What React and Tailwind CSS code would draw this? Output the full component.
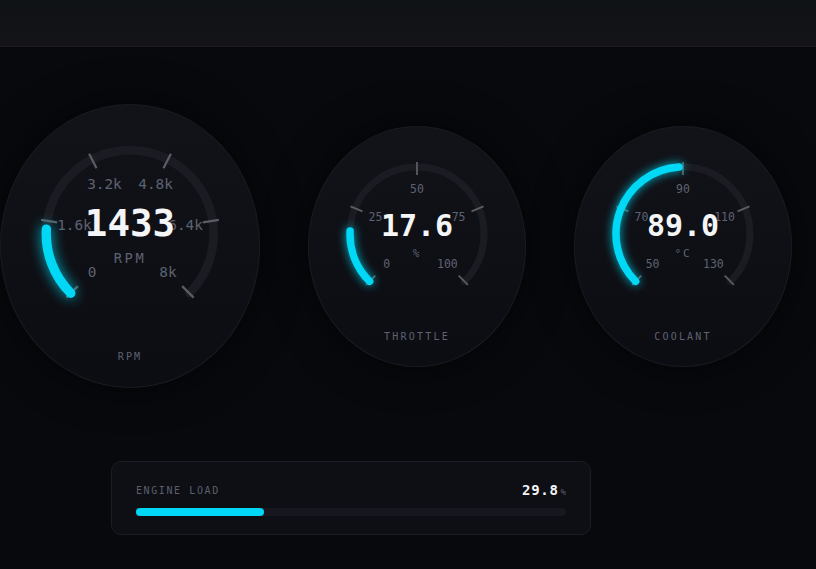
import React from "react";

const CYAN = "#00d8f5";

const polar = (cx, cy, r, a) => {
  const rad = (a * Math.PI) / 180;
  return [cx + r * Math.sin(rad), cy - r * Math.cos(rad)];
};

const arcPath = (cx, cy, r, from, to) => {
  const [x1, y1] = polar(cx, cy, r, from);
  const [x2, y2] = polar(cx, cy, r, to);
  const large = to - from > 180 ? 1 : 0;
  return `M ${x1} ${y1} A ${r} ${r} 0 ${large} 1 ${x2} ${y2}`;
};

function Gauge({ value, min, max, ticks, display, unit, label, scale = 1, w, h }) {
  const cx = 80;
  const cy = 80;
  const pct = Math.min(1, Math.max(0, (value - min) / (max - min)));
  const end = -135 + pct * 270;
  const size = 160 * scale;

  return (
    <div
      className={`shrink-0 rounded-[50%] border border-[#1a1b22] bg-gradient-to-b from-[#121319] to-[#0c0d12] shadow-[0_0_40px_rgba(0,0,0,0.6)] flex flex-col items-center ${w} ${h} ${
        scale > 1 ? "pt-[29px]" : "pt-[27px]"
      }`}
    >
      <svg width={size} height={size} viewBox="0 0 160 160" className="overflow-visible">
        <path
          d={arcPath(cx, cy, 67, -135, 135)}
          fill="none"
          stroke="#1b1c23"
          strokeWidth="7"
          strokeLinecap="round"
        />
        {ticks.map((t, i) => {
          const a = -135 + (i * 270) / (ticks.length - 1);
          const [x1, y1] = polar(cx, cy, 59, a);
          const [x2, y2] = polar(cx, cy, 72, a);
          const lr = Math.abs(a) > 100 ? 43 : 45;
          const [lx, ly] = polar(cx, cy, lr, a);
          return (
            <g key={t}>
              <line x1={x1} y1={y1} x2={x2} y2={y2} stroke="#5b5d64" strokeWidth="1.8" />
              <text
                x={lx}
                y={ly}
                textAnchor="middle"
                dominantBaseline="central"
                fontSize="11.5"
                fill="#5d6271"
              >
                {t}
              </text>
            </g>
          );
        })}
        <path
          d={arcPath(cx, cy, 67, -135, end)}
          fill="none"
          stroke={CYAN}
          strokeWidth="7.5"
          strokeLinecap="round"
          className="drop-shadow-[0_0_5px_rgba(0,216,245,0.85)]"
        />
        <text
          x={cx}
          y={cy - 8.5}
          textAnchor="middle"
          dominantBaseline="central"
          fontSize="30"
          fontWeight="700"
          fill="#f4f5f7"
        >
          {display}
        </text>
        <text
          x={cx}
          y={cy + 19.5}
          textAnchor="middle"
          dominantBaseline="central"
          fontSize="11"
          letterSpacing="2"
          fill="#5d6271"
        >
          {unit}
        </text>
      </svg>
      <div className="mt-[16px] text-[10px] leading-[14px] tracking-[0.22em] text-[#5d6271]">
        {label}
      </div>
    </div>
  );
}

export default function App() {
  const load = 29.8;

  return (
    <div className="min-h-screen w-full overflow-hidden bg-[#08090d] font-['DejaVu_Sans_Mono',monospace]">
      <div className="h-[47px] border-b border-[#1c1d23] bg-gradient-to-b from-[#0f1214] to-[#131318]" />

      <div className="mt-[57px] flex items-center gap-12">
        <Gauge
          value={1433}
          min={0}
          max={8000}
          ticks={["0", "1.6k", "3.2k", "4.8k", "6.4k", "8k"]}
          display="1433"
          unit="RPM"
          label="RPM"
          scale={1.25}
          w="w-[260px]"
          h="h-[284px]"
        />
        <Gauge
          value={17.6}
          min={0}
          max={100}
          ticks={["0", "25", "50", "75", "100"]}
          display="17.6"
          unit="%"
          label="THROTTLE"
          w="w-[218px]"
          h="h-[241px]"
        />
        <Gauge
          value={89}
          min={50}
          max={130}
          ticks={["50", "70", "90", "110", "130"]}
          display="89.0"
          unit="°C"
          label="COOLANT"
          w="w-[218px]"
          h="h-[241px]"
        />
      </div>

      <div className="mt-[73px] ml-[111px] w-[480px] rounded-[10px] border border-[#1c1d24] bg-[#0e0f14] px-6 pt-[19px] pb-[18px]">
        <div className="flex items-center justify-between h-[18px]">
          <span className="text-[10px] tracking-[0.16em] text-[#5a5f6d]">ENGINE LOAD</span>
          <span className="flex items-baseline">
            <span className="text-[14px] font-bold tracking-[0.05em] text-[#f4f5f7]">29.8</span>
            <span className="ml-[2px] text-[9px] text-[#5a5f6d]">%</span>
          </span>
        </div>
        <div className="mt-[9px] h-2 w-full rounded-full bg-[#16171f]">
          <div className="h-2 rounded-full bg-[#00d8f5]" style={{ width: `${load}%` }} />
        </div>
      </div>
    </div>
  );
}
